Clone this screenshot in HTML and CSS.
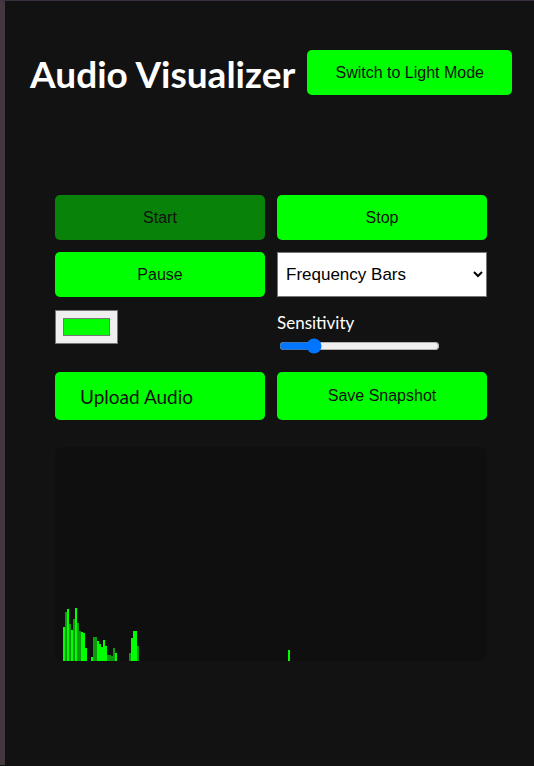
FILE: index.html
```html
<!DOCTYPE html>
<html>
<head>
<meta charset="utf-8">
<link rel="stylesheet" href="styles.css">
</head>
<body>
<header class="top">
  <h1 class="title">Audio Visualizer</h1>
  <button class="btn mode-btn">Switch to Light Mode</button>
</header>
<main class="panel">
  <div class="controls">
    <button class="btn btn-active">Start</button>
    <button class="btn">Stop</button>
    <button class="btn">Pause</button>
    <select class="mode-select">
      <option>Frequency Bars</option>
      <option>Waveform</option>
    </select>
    <div class="cell">
      <input class="color-pick" type="color" value="#00ff00">
    </div>
    <div class="cell sens">
      <label class="sens-label" for="sens">Sensitivity</label>
      <input id="sens" class="slider" type="range" min="0.1" max="5" step="0.1" value="1">
    </div>
    <label class="btn upload">Upload Audio</label>
    <button class="btn snap">Save Snapshot</button>
  </div>
  <div class="canvas">
    <div class="bars">
      <span class="bar b1" style="height:34px"></span>
      <span class="bar b2" style="height:49px"></span>
      <span class="bar b1" style="height:52px"></span>
      <span class="bar b2" style="height:37px"></span>
      <span class="bar b1" style="height:31px"></span>
      <span class="bar b2" style="height:42px"></span>
      <span class="bar b1" style="height:53px"></span>
      <span class="bar b2" style="height:38px"></span>
      <span class="bar b2" style="height:30px"></span>
      <span class="bar b1" style="height:29px"></span>
      <span class="bar b1" style="height:28px"></span>
      <span class="bar b1" style="height:13px"></span>
      <span class="bar" style="height:0px"></span>
      <span class="bar" style="height:0px"></span>
      <span class="bar b1" style="height:4px"></span>
      <span class="bar b2" style="height:24px"></span>
      <span class="bar b2" style="height:24px"></span>
      <span class="bar b1" style="height:20px"></span>
      <span class="bar b1" style="height:17px"></span>
      <span class="bar b1" style="height:14px"></span>
      <span class="bar b1" style="height:21px"></span>
      <span class="bar b1" style="height:15px"></span>
      <span class="bar b2" style="height:6px"></span>
      <span class="bar b2" style="height:6px"></span>
      <span class="bar b2" style="height:5px"></span>
      <span class="bar b2" style="height:13px"></span>
      <span class="bar b1" style="height:8px"></span>
      <span class="bar" style="height:0px"></span>
      <span class="bar" style="height:0px"></span>
      <span class="bar" style="height:0px"></span>
      <span class="bar" style="height:0px"></span>
      <span class="bar" style="height:0px"></span>
      <span class="bar" style="height:0px"></span>
      <span class="bar b2" style="height:8px"></span>
      <span class="bar b1" style="height:23px"></span>
      <span class="bar b1" style="height:30px"></span>
      <span class="bar b1" style="height:30px"></span>
      <span class="bar b2" style="height:15px"></span>
      <span class="bar lone b1" style="height:11px"></span>
    </div>
  </div>
</main>
</body>
</html>
```
FILE: styles.css
```css
html, body {
  margin: 0;
  padding: 0;
}
body {
  background: #121212;
  border-left: 5px solid #45373f;
  border-top: 1px solid #3a2f3c;
  min-height: 765px;
  box-sizing: border-box;
  font-family: Lato, "Noto Sans", sans-serif;
  color: #ffffff;
}
.top {
  display: flex;
  align-items: flex-start;
  gap: 12px;
  padding: 49px 0 0 25px;
}
.title {
  margin: 0;
  font-size: 37px;
  font-weight: 700;
  line-height: 45px;
  padding-top: 1px;
}
.btn {
  background: #00ff00;
  color: #111;
  border: none;
  border-radius: 5px;
  font-family: "Liberation Sans", Arial, sans-serif;
  font-size: 16px;
  height: 45px;
  padding: 0;
  display: flex;
  align-items: center;
  justify-content: center;
}
.mode-btn {
  width: 205px;
}
.panel {
  width: 432px;
  margin: 99px 0 0 50px;
}
.controls {
  display: grid;
  grid-template-columns: 210px 210px;
  grid-template-rows: 45px 45px 51px 48px;
  column-gap: 12px;
  row-gap: 12px;
}
.btn-active {
  background: #088208;
}
.mode-select {
  width: 210px;
  height: 45px;
  font-family: "Liberation Sans", Arial, sans-serif;
  font-size: 17px;
  color: #000;
  background: #fff;
  border: 1px solid #767676;
  border-radius: 0;
  padding: 0 2px 0 4px;
}
.cell {
  display: flex;
  flex-direction: column;
}
.color-pick {
  width: 63px;
  height: 34px;
  margin: 1px 0 0 0;
  padding: 3px 5px;
  box-sizing: border-box;
  background: #efefef;
  border: 1px solid #767676;
  border-radius: 0;
}
.sens-label {
  font-size: 17px;
  line-height: 20px;
  margin-top: 4px;
}
.slider {
  width: 161px;
  margin: 5px 0 0 2px;
}
.upload {
  height: 48px;
  justify-content: flex-start;
  padding-left: 25px;
  font-family: Lato, "Noto Sans", sans-serif;
  font-size: 19px;
  box-sizing: border-box;
}
.snap {
  height: 48px;
}
.canvas {
  margin-top: 27px;
  height: 214px;
  background: #0f0f0f;
  border-radius: 8px;
  display: flex;
  align-items: flex-end;
  padding-left: 8px;
}
.bars {
  display: flex;
  align-items: flex-end;
  gap: 0.5px;
}
.bar {
  width: 1.5px;
  display: block;
}
.b1 {
  background: #00ff00;
}
.b2 {
  background: #0b9a0b;
}
.lone {
  margin-left: 149px;
}
```
